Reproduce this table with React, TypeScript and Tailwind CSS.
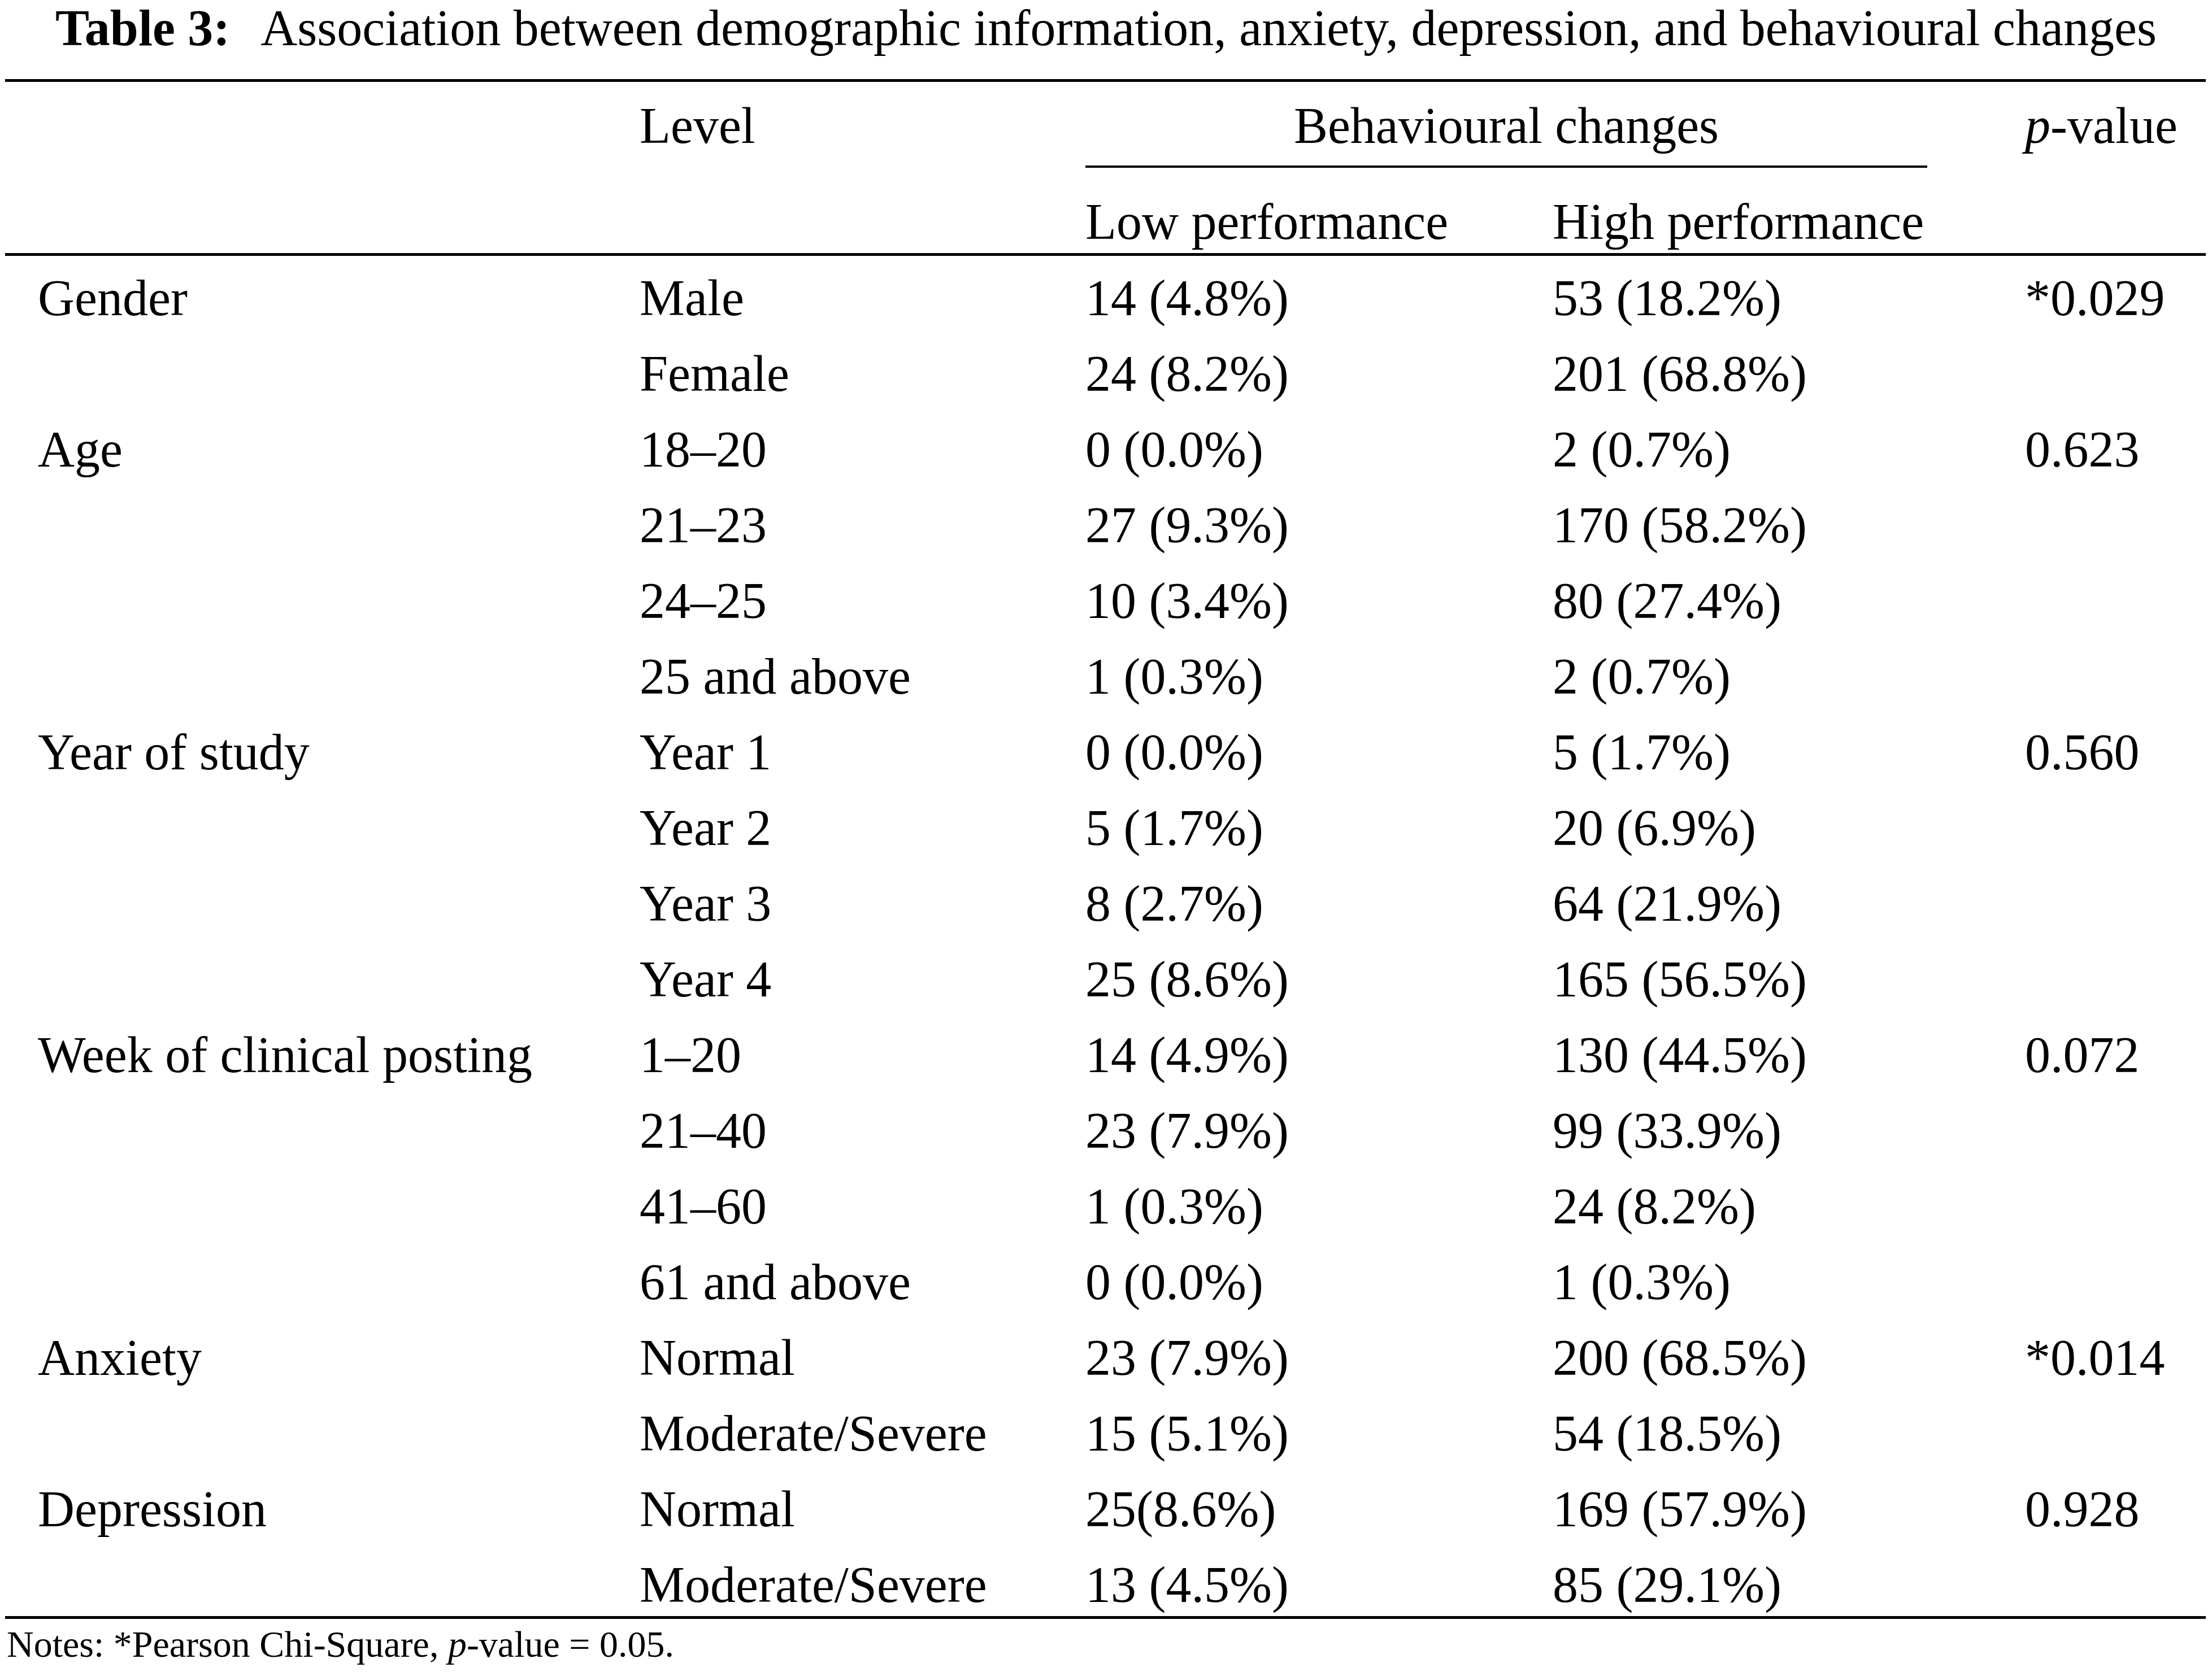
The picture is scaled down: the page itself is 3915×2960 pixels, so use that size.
const rows: [string, string, string, string, string][] = [
  ['Gender', 'Male', '14 (4.8%)', '53 (18.2%)', '*0.029'],
  ['', 'Female', '24 (8.2%)', '201 (68.8%)', ''],
  ['Age', '18–20', '0 (0.0%)', '2 (0.7%)', '0.623'],
  ['', '21–23', '27 (9.3%)', '170 (58.2%)', ''],
  ['', '24–25', '10 (3.4%)', '80 (27.4%)', ''],
  ['', '25 and above', '1 (0.3%)', '2 (0.7%)', ''],
  ['Year of study', 'Year 1', '0 (0.0%)', '5 (1.7%)', '0.560'],
  ['', 'Year 2', '5 (1.7%)', '20 (6.9%)', ''],
  ['', 'Year 3', '8 (2.7%)', '64 (21.9%)', ''],
  ['', 'Year 4', '25 (8.6%)', '165 (56.5%)', ''],
  ['Week of clinical posting', '1–20', '14 (4.9%)', '130 (44.5%)', '0.072'],
  ['', '21–40', '23 (7.9%)', '99 (33.9%)', ''],
  ['', '41–60', '1 (0.3%)', '24 (8.2%)', ''],
  ['', '61 and above', '0 (0.0%)', '1 (0.3%)', ''],
  ['Anxiety', 'Normal', '23 (7.9%)', '200 (68.5%)', '*0.014'],
  ['', 'Moderate/Severe', '15 (5.1%)', '54 (18.5%)', ''],
  ['Depression', 'Normal', '25(8.6%)', '169 (57.9%)', '0.928'],
  ['', 'Moderate/Severe', '13 (4.5%)', '85 (29.1%)', ''],
];

export default function App() {
  return (
    <div className="w-[3915px] h-[2960px] bg-white text-black font-['Liberation_Serif','Times_New_Roman',serif] overflow-hidden">
      {/* Caption */}
      <div className="text-center text-[90px] leading-[100px] whitespace-nowrap">
        <span className="font-bold">Table 3:</span>
        <span className="ml-[54px]">
          Association between demographic information, anxiety, depression, and behavioural changes
        </span>
      </div>

      <div className="ml-[9px] w-[3895px] mt-[40px] text-[90px]">
        <div className="h-[5px] bg-black" />

        {/* Header */}
        <div className="grid grid-cols-[1065px_789px_1663px_1fr] items-start pl-[58px] pt-[23px] leading-[110px]">
          <div />
          <div>Level</div>
          <div className="flex flex-col">
            <div className="w-[1490px] text-center">Behavioural changes</div>
            <div className="w-[1490px] h-[4px] bg-black mt-[15px]" />
            <div className="grid grid-cols-[827px_1fr] mt-[41px] whitespace-nowrap">
              <div>Low performance</div>
              <div>High performance</div>
            </div>
          </div>
          <div>
            <span className="italic">p</span>-value
          </div>
        </div>

        <div className="h-[5px] bg-black" />

        {/* Body */}
        <div className="grid grid-cols-[1065px_789px_827px_836px_1fr] gap-y-[24px] pl-[58px] pt-[20px] leading-[110px] whitespace-nowrap">
          {rows.map((r, i) => (
            <div key={i} className="contents">
              <div>{r[0]}</div>
              <div>{r[1]}</div>
              <div>{r[2]}</div>
              <div>{r[3]}</div>
              <div>{r[4]}</div>
            </div>
          ))}
        </div>

        <div className="h-[5px] bg-black" />
      </div>

      <div className="pl-[12px] mt-[9px] text-[66px] leading-[72px] whitespace-nowrap">
        Notes: *Pearson Chi-Square, <span className="italic">p</span>-value = 0.05.
      </div>
    </div>
  );
}
